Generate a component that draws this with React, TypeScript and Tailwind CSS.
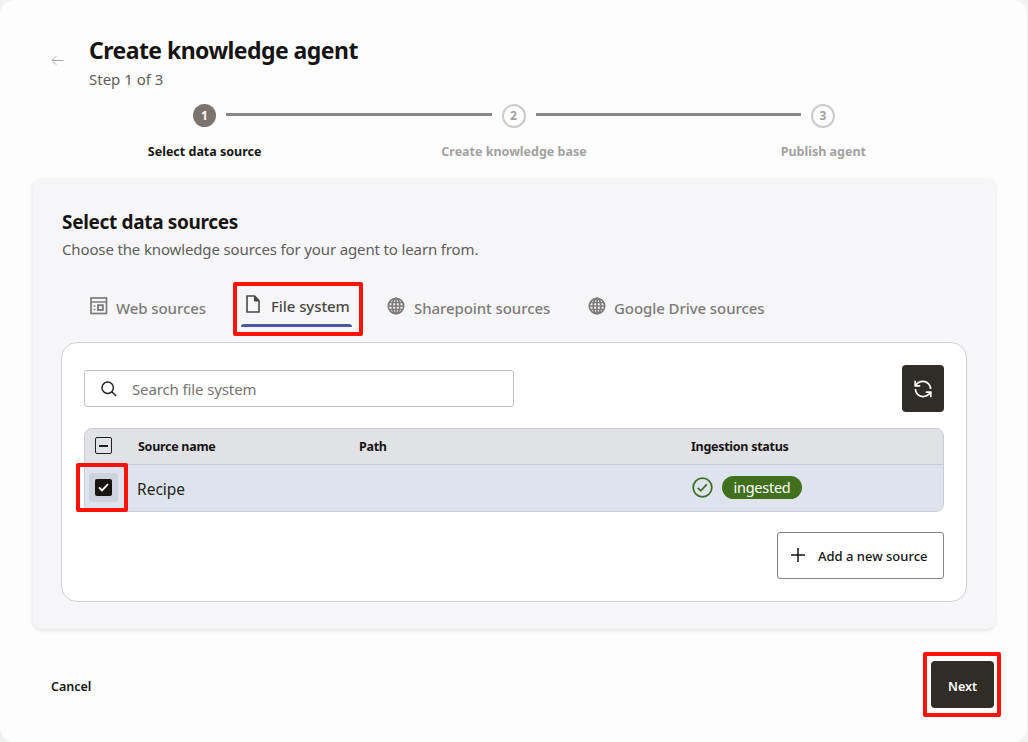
import React, { useState } from 'react';
import clsx from 'clsx';

interface Step {
  id: number;
  label: string;
  labelClass: string;
}

interface SourceTab {
  id: string;
  label: string;
  icon: React.ElementType;
  className: string;
  textClass: string;
}

const WebIcon = () => (
  <svg width="18" height="18" viewBox="0 0 18 18" fill="none" stroke="currentColor" strokeWidth="1.7">
    <rect x="1" y="1" width="15.5" height="15.5" />
    <path d="M1 5h15.5M3.6 9h1.8M3.6 12.5h1.8" />
    <rect x="8" y="8.2" width="4.8" height="4.8" strokeWidth="1.9" />
  </svg>
);

const FileIcon = () => (
  <svg width="14" height="18" viewBox="0 0 14 18" fill="none" stroke="currentColor" strokeWidth="1.6">
    <path d="M1 1h7.6L13 5.8V17H1z" />
    <path d="M8.4 1v5H13z" fill="currentColor" strokeWidth="1" />
  </svg>
);

const GlobeIcon = () => (
  <svg width="18" height="18" viewBox="0 0 18 18" fill="none" stroke="currentColor" strokeWidth="1.7">
    <circle cx="9" cy="9" r="7.7" />
    <ellipse cx="9" cy="9" rx="3.8" ry="7.7" />
    <path d="M9 1v16M1.2 9h15.6M2.2 5.5h13.6M2.2 12.5h13.6" />
  </svg>
);

const SearchIcon = () => (
  <svg width="16" height="16" viewBox="0 0 16 16" fill="none" stroke="currentColor" strokeWidth="1.5">
    <circle cx="6.7" cy="6.7" r="5.7" />
    <path d="M10.8 10.8l4.4 4.2" />
  </svg>
);

const RefreshIcon = () => (
  <svg width="18" height="18" viewBox="0 0 18 18" fill="none" stroke="currentColor" strokeWidth="1.7">
    <path d="M1.2 .8v5h5" />
    <path d="M1.6 5.4C3.6 2.6 6 1.4 9 1.4A7.6 7.6 0 0 1 16.6 9" />
    <path d="M16.8 17.2v-5h-5" />
    <path d="M16.4 12.6C14.4 15.4 12 16.6 9 16.6A7.6 7.6 0 0 1 1.4 9" />
  </svg>
);

const STEPS: Step[] = [
  { id: 1, label: 'Select data source', labelClass: 'text-[#161513]' },
  { id: 2, label: 'Create knowledge base', labelClass: 'text-[#a3a19f]' },
  { id: 3, label: 'Publish agent', labelClass: 'text-[#a3a19f]' },
];

const TABS: SourceTab[] = [
  { id: 'web', label: 'Web sources', icon: WebIcon, className: 'w-[143px]', textClass: 'ml-2' },
  { id: 'file', label: 'File system', icon: FileIcon, className: 'w-[130px] pl-[13px]', textClass: 'ml-[11px]' },
  { id: 'sharepoint', label: 'Sharepoint sources', icon: GlobeIcon, className: 'w-[225px] pl-6', textClass: 'ml-[9px]' },
  { id: 'drive', label: 'Google Drive sources', icon: GlobeIcon, className: 'w-[200px]', textClass: 'ml-2' },
];

function Stepper() {
  return (
    <div>
      <div className="mt-[13px] flex h-6 items-center pr-[192px] pl-[192px]">
        {STEPS.map((step) => (
          <React.Fragment key={step.id}>
            {step.id > 1 && <div className="mx-[10px] mb-[3px] h-[3px] flex-1 bg-[#8a8886]" />}
            <div
              className={clsx(
                'flex shrink-0 items-center justify-center rounded-full text-[12px] font-bold',
                step.id === 1
                  ? 'ml-px size-[23px] self-start bg-[#7b746e] text-white'
                  : 'size-6 border-2 border-[#cccbca] text-[#a09e9c]',
              )}
            >
              {step.id}
            </div>
          </React.Fragment>
        ))}
      </div>
      <div className="mt-[14px] mr-[49px] ml-[50px] grid h-[19px] grid-cols-3 text-center text-[12.5px] leading-5 font-bold">
        {STEPS.map((step) => (
          <span key={step.id} className={step.labelClass}>{step.label}</span>
        ))}
      </div>
    </div>
  );
}

function SourceTabs({ active, onSelect }: { active: string; onSelect: (id: string) => void }) {
  return (
    <div className="mt-[21px] flex h-[54px] pl-[57px]">
      {TABS.map(({ id, label, icon: Icon, className, textClass }) => {
        const selected = id === active;
        return (
          <button
            key={id}
            onClick={() => onSelect(id)}
            className={clsx(
              'relative flex items-center text-left text-[15px] font-medium tracking-[-0.08px] whitespace-nowrap',
              className,
              selected ? 'pb-[6px] text-[#4a4846]' : 'pb-px text-[#7d7b79]',
            )}
          >
            <span className={clsx('shrink-0', selected ? '-mt-[4px]' : '-mt-[5px]')}><Icon /></span>
            <span className={textClass}>{label}</span>
            {selected && (
              <>
                <span className="absolute bottom-[9px] left-2 h-[3px] w-[111px] rounded-t-[3px] bg-[#465aa0]" />
                <span className="absolute inset-0 rounded-[2px] border-4 border-[#fe1108]" />
              </>
            )}
          </button>
        );
      })}
    </div>
  );
}

function SourceTable() {
  const [checked, setChecked] = useState(true);

  return (
    <div className="relative mt-4 h-[84px] rounded-lg border border-[#c9ccd1] bg-[#dee4ee]">
      <div className="flex h-9 items-center rounded-t-[7px] border-b border-[#c5cad2] bg-[#e1e2e6] pl-[10px] text-[12.5px] font-bold tracking-[-0.28px] text-[#161513]">
        <span className="mt-[-2px] flex size-[17px] items-center justify-center rounded-[2px] border-[1.5px] border-[#22201f]">
          <span className="h-[2px] w-[9px] bg-[#22201f]" />
        </span>
        <span className="mt-px ml-[26px] w-[221px]">Source name</span>
        <span className="mt-px w-[332px]">Path</span>
        <span className="mt-px">Ingestion status</span>
      </div>
      <div className="flex h-[46px] items-center pl-1 text-[15.5px] text-[#262422]">
        <button
          onClick={() => setChecked(!checked)}
          className="-mt-px flex size-[29px] items-center justify-center rounded-[3px] bg-[#cdd2db]"
        >
          <span className="flex size-[17px] items-center justify-center rounded-[2px] bg-[#171615]">
            {checked && (
              <svg width="11" height="9" viewBox="0 0 11 9" fill="none" stroke="white" strokeWidth="1.8">
                <path d="M1 4.4l3 3L10 1.2" />
              </svg>
            )}
          </span>
        </button>
        <span className="mt-[3px] ml-[19px] w-[555px]">Recipe</span>
        <svg className="-mt-px" width="21" height="21" viewBox="0 0 21 21" fill="none" stroke="#426f27" strokeWidth="1.8">
          <circle cx="10.5" cy="10.5" r="9.3" />
          <path d="M5.8 10.8l3 3 6-6.5" />
        </svg>
        <span className="-mt-px ml-[9px] flex h-[23px] w-20 items-center justify-center rounded-full bg-[#41701d] text-[14.5px] tracking-[-0.25px] text-white">
          ingested
        </span>
      </div>
      <div className="absolute top-[34px] -left-[9px] h-[49px] w-[52px] rounded-[2px] border-4 border-[#fe1108]" />
    </div>
  );
}

export default function App() {
  const [tab, setTab] = useState('file');

  return (
    <div className="h-[742px] w-[1028px] overflow-hidden bg-[#f1f1f1] font-['Noto_Sans',sans-serif]">
      <main className="flex h-[742px] w-[1027px] flex-col rounded-[14px] bg-[#fdfdfd] pt-[35px]">
        <header className="flex pl-[51px]">
          <svg className="mt-5 text-[#aaa8a6]" width="13" height="11" viewBox="0 0 13 11" fill="none" stroke="currentColor">
            <path d="M12.5 5.5H1M5.2 1.3L1 5.5l4.2 4.2" />
          </svg>
          <div className="ml-[25px]">
            <h1 className="-mt-px mb-px text-[23px] leading-8 font-bold tracking-[-0.55px] text-[#161513]">Create knowledge agent</h1>
            <p className="h-6 text-[15px] leading-6 text-[#5f5d5b]">Step 1 of 3</p>
          </div>
        </header>

        <Stepper />

        <section className="mx-[33px] mt-[18px] h-[450px] w-[962px] rounded-lg bg-[#f6f6f8] px-7 pt-[29px] shadow-[0_1px_4px_rgba(0,0,0,0.12)]">
          <h2 className="pl-px text-[19px] leading-7 font-bold tracking-[-0.33px] text-[#161513]">Select data sources</h2>
          <p className="h-[25px] pl-px text-[15px] leading-[27px] tracking-[-0.14px] text-[#5f5d5b]">
            Choose the knowledge sources for your agent to learn from.
          </p>

          <div className="-ml-7">
            <SourceTabs active={tab} onSelect={setTab} />
          </div>

          <div className="mt-[6px] h-[260px] rounded-2xl border border-[#d0d1d5] bg-white px-[22px] pt-[22px]">
            <div className="flex items-center justify-between">
              <label className="flex h-[37px] w-[430px] items-center rounded-[3px] border border-[#bfbfc1] pl-4 text-[#22201f]">
                <SearchIcon />
                <input
                  placeholder="Search file system"
                  className="mt-[2px] ml-[15px] flex-1 text-[15px] tracking-[-0.12px] outline-none placeholder:text-[#767472]"
                />
              </label>
              <button className="flex h-[47px] w-[42px] items-center justify-center rounded-[4px] bg-[#302c27] text-white">
                <RefreshIcon />
              </button>
            </div>

            <SourceTable />

            <div className="mt-5 flex justify-end">
              <button className="flex h-[47px] w-[167px] items-center rounded-[3px] border border-[#868482] pl-[13px] text-[13px] font-medium text-[#161513]">
                <svg className="-mt-[2px]" width="14" height="14" viewBox="0 0 14 14" stroke="currentColor" strokeWidth="1.5">
                  <path d="M7 0v14M0 7h14" />
                </svg>
                <span className="mt-[3px] ml-[13px]">Add a new source</span>
              </button>
            </div>
          </div>
        </section>

        <footer className="mt-[23px] flex items-start justify-between pr-[26px] pl-[51px] text-[12.5px] font-semibold text-[#161513]">
          <button className="mt-[3px] h-[65px]">Cancel</button>
          <div className="flex h-[65px] w-[78px] items-center justify-center rounded-[2px] border-4 border-[#fe1108] bg-white">
            <button className="h-[47px] w-[63px] rounded-[4px] bg-[#302c27] pt-[5px] pl-px text-white">Next</button>
          </div>
        </footer>
      </main>
    </div>
  );
}
